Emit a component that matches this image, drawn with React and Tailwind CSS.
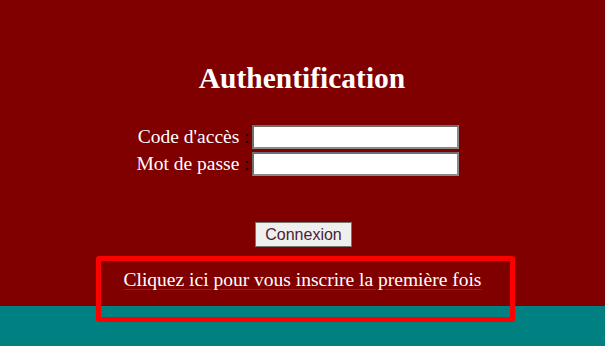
import React from 'react';

export default function App() {
  return (
    <div className="relative w-[605px] h-[346px] overflow-hidden bg-[#008080] font-['Liberation_Serif',serif]">
      {/* Main maroon panel */}
      <div className="h-[306px] bg-[#800000] flex flex-col items-center pt-[62px]">
        <h1 className="text-[29.5px] leading-[33px] font-bold text-white mr-[1px]">Authentification</h1>

        <div className="mt-[30px] mr-[10px] grid grid-cols-[auto_auto] gap-y-[3px] items-center text-[19.5px] leading-[24px]">
          <div className="text-right pr-[2px]">
            <span className="text-white">Code d'accès</span>
            <span className="text-black"> :</span>
          </div>
          <input type="text" className="w-[207px] h-[24px] bg-white border-2 border-[#8a8a8a] border-t-[#6e6e6e] border-l-[#6e6e6e] outline-none" />
          <div className="text-right pr-[2px]">
            <span className="text-white">Mot de passe</span>
            <span className="text-black"> :</span>
          </div>
          <input type="password" className="w-[207px] h-[24px] bg-white border-2 border-[#8a8a8a] border-t-[#6e6e6e] border-l-[#6e6e6e] outline-none" />
        </div>

        <button className="mt-[46px] ml-[2px] w-[97px] h-[25px] bg-[#efefef] border border-[#767676] text-[16px] leading-none text-[#4a2232] font-['Liberation_Sans',Arial,sans-serif]">
          Connexion
        </button>

        <a href="#" className="mt-[21px] text-[19.5px] leading-[24px] text-white underline decoration-[#5a2a8a] underline-offset-[3px]">
          Cliquez ici pour vous inscrire la première fois
        </a>
      </div>

      {/* Red highlight box */}
      <div className="absolute left-[96px] top-[256px] w-[419px] h-[66px] border-[5px] border-[#ff0000] rounded-[3px]" />
    </div>
  );
}
